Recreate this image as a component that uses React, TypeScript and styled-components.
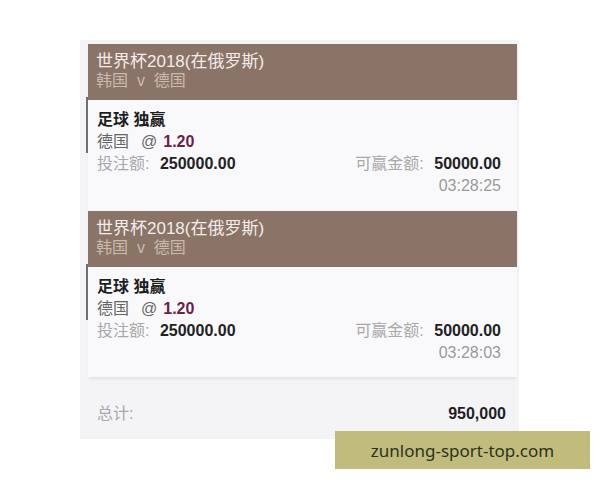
import styled, { createGlobalStyle } from 'styled-components';

const GlobalStyle = createGlobalStyle`
  html, body {
    margin: 0;
    padding: 0;
    background: #ffffff;
  }
  body {
    width: 600px;
    height: 480px;
    overflow: hidden;
    font-family: "Liberation Sans", "Noto Sans CJK SC", sans-serif;
  }
`;

interface Bet {
    league: string,
    match: string,
    market: string,
    pick: string,
    odds: string,
    stake: string,
    win: string,
    time: string,
}

const bets: Bet[] = [
    { league: '世界杯2018(在俄罗斯)', match: '韩国  v  德国', market: '足球 独赢', pick: '德国', odds: '1.20', stake: '250000.00', win: '50000.00', time: '03:28:25' },
    { league: '世界杯2018(在俄罗斯)', match: '韩国  v  德国', market: '足球 独赢', pick: '德国', odds: '1.20', stake: '250000.00', win: '50000.00', time: '03:28:03' },
];

export default function App() {
    return (
        <>
            <GlobalStyle />
            <Page>
                <Slip>
                    <List>
                        {bets.map((bet, i) => <Card key={i}>
                            <Header>
                                <League>{bet.league}</League>
                                <Match>{bet.match}</Match>
                            </Header>
                            <Body>
                                <Market>{bet.market}</Market>
                                <PickRow>{bet.pick}<At>@</At><Odds>{bet.odds}</Odds></PickRow>
                                <AmountRow>
                                    <span><Label>投注额:</Label> <Value>{bet.stake}</Value></span>
                                    <span><Label>可赢金额:</Label> <Value>{bet.win}</Value></span>
                                </AmountRow>
                                <Time>{bet.time}</Time>
                            </Body>
                        </Card>)}
                    </List>
                    <Total>
                        <Label>总计:</Label>
                        <TotalValue>950,000</TotalValue>
                    </Total>
                </Slip>
                <Watermark>zunlong-sport-top.com</Watermark>
            </Page>
        </>
    );
}

const Page = styled.div`
  position: relative;
  width: 600px;
  height: 480px;
  padding: 40px 0 0 80px;
  box-sizing: border-box;
`;

const Slip = styled.div`
  width: 439px;
  height: 399px;
  box-sizing: border-box;
  background: #f4f4f7;
  padding: 4px 2px 0 8px;
  display: flex;
  flex-direction: column;
`;

const List = styled.div`
  display: flex;
  flex-direction: column;
  gap: 1px;
  box-shadow: 0 3px 3px -1px rgba(0, 0, 0, 0.08);
`;

const Card = styled.div`
  display: flex;
  flex-direction: column;
`;

const Header = styled.div`
  height: 56px;
  box-sizing: border-box;
  background: #8a7468;
  padding: 8px 0 0 8px;
  line-height: 19px;
`;

const League = styled.div`
  color: #f4ece8;
  font-size: 17px;
`;

const Match = styled.div`
  color: #cbb9ae;
  font-size: 16px;
  white-space: pre;
`;

const Body = styled.div`
  position: relative;
  height: 110px;
  box-sizing: border-box;
  background: #f9f9fb;
  padding: 9px 16px 0 9px;
  font-size: 16px;
  line-height: 22px;
  color: #222;

  &::before {
    content: '';
    position: absolute;
    left: -2px;
    top: -3px;
    width: 2px;
    height: 56px;
    background: #6f6f6f;
  }
`;

const Market = styled.div`
  font-weight: bold;
  color: #1e1e1e;
`;

const PickRow = styled.div`
  color: #666;
`;

const At = styled.span`
  color: #666;
  margin: 0 6px 0 12px;
`;

const Odds = styled.span`
  color: #6b1f4a;
  font-weight: bold;
`;

const AmountRow = styled.div`
  display: flex;
  justify-content: space-between;
`;

const Label = styled.span`
  color: #a8a8a8;
  margin-right: 6px;
`;

const Value = styled.span`
  color: #222;
  font-weight: bold;
`;

const Time = styled.div`
  text-align: right;
  color: #999;
`;

const Total = styled.div`
  display: flex;
  justify-content: space-between;
  align-items: center;
  padding: 26px 11px 0 9px;
  font-size: 16px;
  line-height: 22px;
`;

const TotalValue = styled.span`
  color: #1e1e1e;
  font-weight: bold;
`;

const Watermark = styled.div`
  position: absolute;
  left: 335px;
  top: 431px;
  width: 255px;
  height: 38px;
  background: #c1bc7c;
  color: #2a331e;
  font-family: "Noto Sans", "Liberation Sans", sans-serif;
  font-size: 17px;
  display: flex;
  align-items: center;
  justify-content: center;
`;
